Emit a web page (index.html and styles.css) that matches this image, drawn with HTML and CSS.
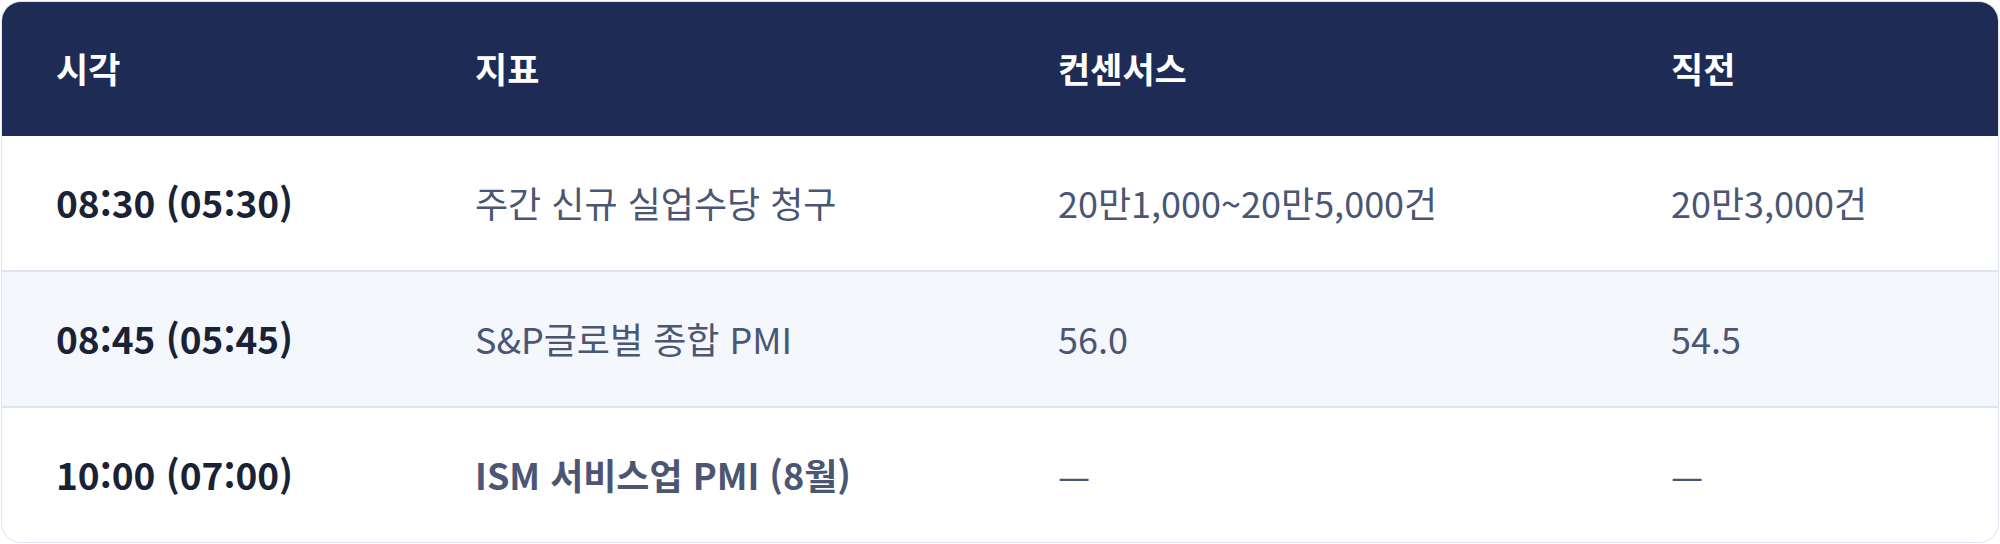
FILE: index.html
```html
<!DOCTYPE html>
<html lang="ko">
<head>
<meta charset="utf-8">
<title>경제지표 일정</title>
<link rel="stylesheet" href="styles.css">
</head>
<body>
<div class="card">
  <div class="row head">
    <div class="cell">시각</div>
    <div class="cell">지표</div>
    <div class="cell">컨센서스</div>
    <div class="cell">직전</div>
  </div>
  <div class="row">
    <div class="cell time">08:30 (05:30)</div>
    <div class="cell">주간 신규 실업수당 청구</div>
    <div class="cell">20만1,000~20만5,000건</div>
    <div class="cell">20만3,000건</div>
  </div>
  <div class="row alt">
    <div class="cell time">08:45 (05:45)</div>
    <div class="cell">S&amp;P글로벌 종합 PMI</div>
    <div class="cell">56.0</div>
    <div class="cell">54.5</div>
  </div>
  <div class="row last">
    <div class="cell time">10:00 (07:00)</div>
    <div class="cell strong">ISM 서비스업 PMI (8월)</div>
    <div class="cell">—</div>
    <div class="cell">—</div>
  </div>
</div>
</body>
</html>
```

FILE: styles.css
```css
html, body {
  margin: 0;
  padding: 0;
  background: #ffffff;
}
body {
  padding: 1px;
  font-family: "Noto Sans CJK KR", "Noto Sans", sans-serif;
}
.card {
  border: 1px solid #dfe5f0;
  border-radius: 20px;
  overflow: hidden;
  background: #ffffff;
}
.row {
  display: grid;
  grid-template-columns: 419px 583px 613px 1fr;
  align-items: center;
  height: 134px;
  border-bottom: 2px solid #dfe5f0;
  font-size: 36px;
  line-height: 1.3;
  color: #4a5673;
}
.row.last {
  border-bottom: none;
}
.row.alt {
  background: #f4f7fc;
}
.row.head {
  background: #1e2c55;
  color: #ffffff;
  font-weight: 700;
  font-size: 35px;
  border-bottom: none;
}
.cell {
  padding-left: 54px;
  white-space: nowrap;
  padding-bottom: 2px;
}
.time {
  font-weight: 700;
  font-size: 37px;
  color: #1a2236;
}
.strong {
  font-weight: 700;
}
```
